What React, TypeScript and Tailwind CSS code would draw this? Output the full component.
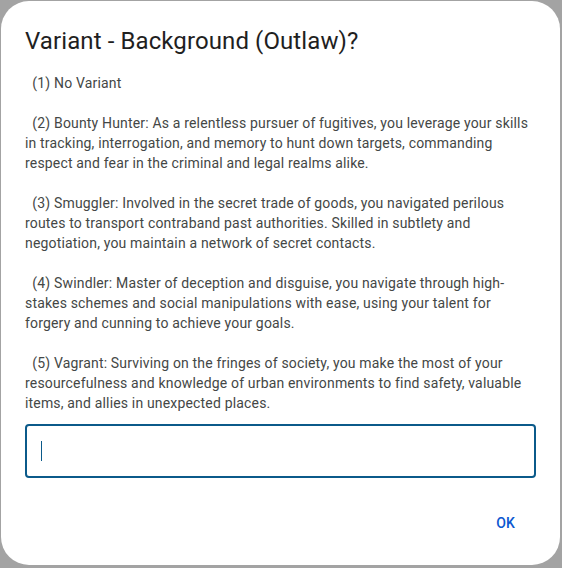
const body = `  (1) No Variant

  (2) Bounty Hunter: As a relentless pursuer of fugitives, you leverage your skills in tracking, interrogation, and memory to hunt down targets, commanding respect and fear in the criminal and legal realms alike.

  (3) Smuggler: Involved in the secret trade of goods, you navigated perilous routes to transport contraband past authorities. Skilled in subtlety and negotiation, you maintain a network of secret contacts.

  (4) Swindler: Master of deception and disguise, you navigate through high-stakes schemes and social manipulations with ease, using your talent for forgery and cunning to achieve your goals.

  (5) Vagrant: Surviving on the fringes of society, you make the most of your resourcefulness and knowledge of urban environments to find safety, valuable items, and allies in unexpected places.`;

export default function App() {
  return (
    <div className="h-[568px] w-[562px] bg-[#a3a3a3] pt-px pl-px pr-[2px] pb-[3px] font-['Roboto',sans-serif]">
      <div className="flex h-full flex-col rounded-[28px] bg-white px-6 pt-6 pb-[22px]">
        <h1 className="text-[24px] leading-8 tracking-[0.1px] text-[#1f1f1f]">Variant - Background (Outlaw)?</h1>
        <p className="mt-4 whitespace-pre-wrap text-[14px] leading-5 tracking-[0.17px] text-[#444746]">{body}</p>
        <div className="mt-[11px] flex h-[54px] items-center rounded-[4px] border-2 border-[#0b5a8a] px-[14px]">
          <div className="h-5 w-px bg-[#0b5a8a]" />
        </div>
        <div className="mt-auto flex justify-end">
          <button className="mr-[9px] h-10 px-3 text-[14px] font-medium tracking-[0.1px] text-[#0b57d0]">OK</button>
        </div>
      </div>
    </div>
  );
}
